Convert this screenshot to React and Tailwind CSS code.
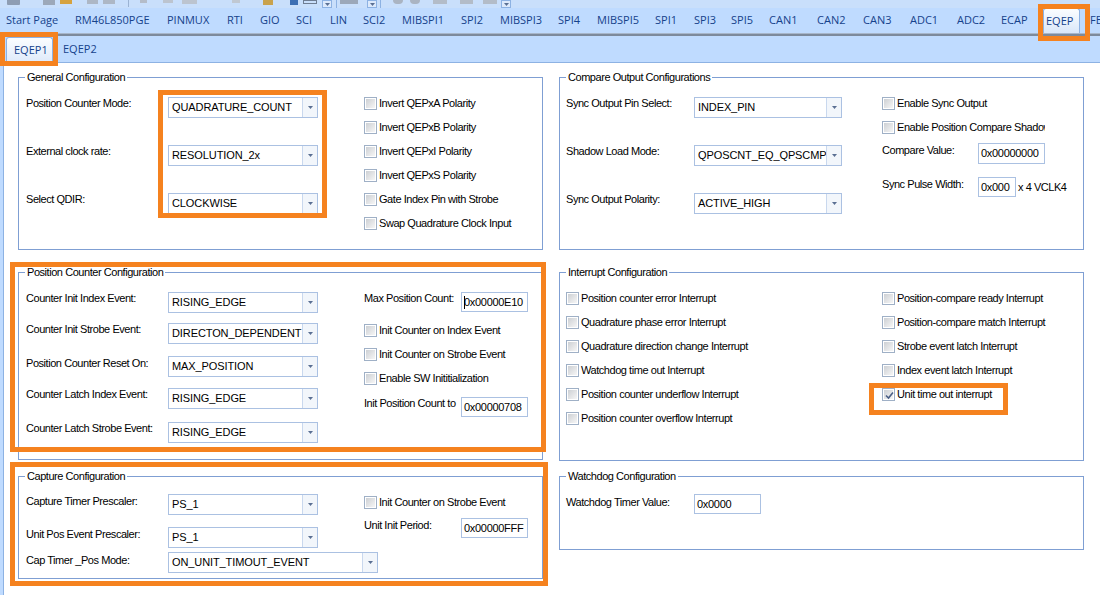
import React from "react";

const LABEL = "text-[11px] leading-[13px] tracking-[-0.45px] text-black whitespace-nowrap";

const tabs = [
  ["Start Page", "w-[69px]"],
  ["RM46L850PGE", "w-[92px]"],
  ["PINMUX", "w-[60px]"],
  ["RTI", "w-[33px]"],
  ["GIO", "w-[36px]"],
  ["SCI", "w-[34px]"],
  ["LIN", "w-[33px]"],
  ["SCI2", "w-[39px]"],
  ["MIBSPI1", "w-[59px]"],
  ["SPI2", "w-[39px]"],
  ["MIBSPI3", "w-[58px]"],
  ["SPI4", "w-[39px]"],
  ["MIBSPI5", "w-[58px]"],
  ["SPI1", "w-[39px]"],
  ["SPI3", "w-[37px]"],
  ["SPI5", "w-[38px]"],
  ["CAN1", "w-[48px]"],
  ["CAN2", "w-[46px]"],
  ["CAN3", "w-[47px]"],
  ["ADC1", "w-[47px]"],
  ["ADC2", "w-[44px]"],
  ["ECAP", "w-[45px]"],
  ["EQEP", "w-[44px]"],
  ["FEE", "w-[40px]"],
];

function Check({ checked }) {
  return (
    <span className="relative block w-[13px] h-[13px] shrink-0 border border-[#9fb0c6] bg-white p-[1px]">
      <span className="block w-full h-full bg-gradient-to-br from-[#cdd0d4] to-[#f6f6f6]" />
      {checked && (
        <svg className="absolute left-[1px] top-[1px]" width="11" height="11" viewBox="0 0 11 11">
          <path d="M2 5.5 L4.5 8 L9 2.5" fill="none" stroke="#4a5f86" strokeWidth="1.6" />
        </svg>
      )}
    </span>
  );
}

function CheckRow({ label, checked }) {
  return (
    <div className="flex items-center h-[24px]">
      <Check checked={checked} />
      <span className={`${LABEL} ml-[2px]`}>{label}</span>
    </div>
  );
}

function Arrow() {
  return (
    <svg width="5" height="3" viewBox="0 0 5 3">
      <path d="M0 0 H5 L2.5 3 Z" fill="#5a6f93" />
    </svg>
  );
}

function Combo({ value, w = "w-[150px]" }) {
  return (
    <div className={`${w} h-[21px] shrink-0 flex border border-[#abc1e2] bg-white`}>
      <div className="flex-1 min-w-0 flex items-center pl-[3px] text-[11px] tracking-[-0.1px] text-black overflow-hidden whitespace-nowrap">
        {value}
      </div>
      <div className="w-[15px] shrink-0 border-l border-[#c9d8ee] bg-[#f2f6fb] flex items-center justify-center">
        <Arrow />
      </div>
    </div>
  );
}

function TextBox({ value, w = "w-[67px]", h = "h-[20px]", caret }) {
  return (
    <div
      className={`${w} ${h} shrink-0 flex items-center border border-[#abc1e2] bg-white pl-[2px] text-[11px] tracking-[-0.3px] text-black overflow-hidden whitespace-nowrap`}
    >
      {caret && <span className="w-[1px] h-[13px] bg-black -mr-[1px]" />}
      {value}
    </div>
  );
}

function Group({ title, className, children }) {
  return (
    <div className={`relative shrink-0 border border-[#7f9fd3] ${className}`}>
      <span className={`absolute -top-[7px] left-[6px] bg-white px-[2px] ${LABEL}`}>{title}</span>
      {children}
    </div>
  );
}

function ComboRow({ label, value, labelW, comboW, className = "", labelPad = "" }) {
  return (
    <div className={`flex items-start ${className}`}>
      <span className={`${LABEL} ${labelW} ${labelPad} shrink-0`}>{label}</span>
      <Combo value={value} w={comboW} />
    </div>
  );
}

function Overlay({ className }) {
  return <div className={`absolute z-10 border-[5px] border-[#f5821f] pointer-events-none ${className}`} />;
}

export default function App() {
  return (
    <div className="relative w-[1100px] h-[595px] overflow-hidden bg-[#bfdbff] font-['Liberation_Sans',Arial,sans-serif] flex flex-col">
      {/* toolbar, cut off at the top */}
      <div className="h-[8px] shrink-0 flex items-start bg-[#c9dffb]">
        <span className="ml-[7px] w-[13px] h-[5px] bg-[#8e9db3] rounded-b-[1px]" />
        <span className="ml-[23px] w-[12px] h-[5px] bg-[#9ca8b9]" />
        <span className="ml-[5px] w-[12px] h-[4px] bg-[#d6a23e]" />
        <span className="ml-[15px] w-[11px] h-[4px] bg-[#adb7c5]" />
        <span className="ml-[5px] w-[12px] h-[4px] bg-[#adb7c5]" />
        <span className="ml-[13px] w-[1px] h-[7px] bg-[#9bb3d3]" />
        <span className="ml-[11px] w-[7px] h-[3px] bg-[#b4bcc8]" />
        <span className="ml-[16px] w-[10px] h-[3px] bg-[#bcc4cf]" />
        <span className="ml-[9px] w-[15px] h-[4px] bg-[#bcc4cf]" />
        <span className="ml-[35px] w-[8px] h-[3px] bg-[#c0c8d2]" />
        <span className="ml-[23px] w-[10px] h-[5px] bg-[#c9a24c]" />
        <span className="ml-[17px] w-[8px] h-[5px] bg-[#3d6fb4]" />
        <span className="ml-[5px] w-[14px] h-[4px] border border-[#6f7d92]" />
        <span className="ml-[5px] w-[10px] h-[8px] border border-[#8db2e3] bg-[#dce9fb] flex items-center justify-center">
          <Arrow />
        </span>
        <span className="ml-[4px] w-[1px] h-[8px] bg-[#8db2e3]" />
        <span className="ml-[3px] w-[18px] h-[4px] bg-[#9ca8b9]" />
        <span className="ml-[9px] w-[10px] h-[8px] border border-[#8db2e3] bg-[#dce9fb] flex items-center justify-center">
          <Arrow />
        </span>
        <span className="ml-[3px] w-[1px] h-[8px] bg-[#8db2e3]" />
        <span className="ml-[12px] w-[10px] h-[4px] rounded-b-full bg-[#aab4c2]" />
        <span className="ml-[7px] w-[10px] h-[4px] rounded-b-full bg-[#aab4c2]" />
        <span className="ml-[13px] w-[14px] h-[4px] bg-[#b3bcc8]" />
        <span className="ml-[13px] w-[13px] h-[4px] bg-[#b3bcc8]" />
        <span className="ml-[10px] w-[14px] h-[4px] bg-[#b3bcc8]" />
        <span className="ml-[4px] w-[10px] h-[8px] border border-[#8db2e3] bg-[#dce9fb] flex items-center justify-center">
          <Arrow />
        </span>
      </div>

      {/* main tab strip */}
      <div className="h-[25px] shrink-0 flex items-stretch pl-[6px] overflow-hidden font-['Open_Sans',sans-serif] text-[11px] text-[#15428b]">
        {tabs.map(([name, w]) =>
          name === "EQEP" ? (
            <div key={name} className={`${w} shrink-0`}>
              <div className="-ml-[3px] w-[37px] h-full pl-[2px] flex items-center border border-b-0 border-[#8db2e3] rounded-t-[3px] bg-gradient-to-b from-[#fbfdff] to-[#d9e7f9]">
                {name}
              </div>
            </div>
          ) : (
            <div key={name} className={`${w} shrink-0 flex items-center whitespace-nowrap`}>
              {name}
            </div>
          )
        )}
      </div>
      <div className="h-[3px] shrink-0 border-t border-[#a7b6ca] border-b-2 border-b-[#7d8a9c] bg-[#c3d7f2]" />

      {/* sub tabs */}
      <div className="h-[27px] shrink-0 flex items-end pl-[6px] border-b border-[#8db2e3] font-['Open_Sans',sans-serif] text-[11px] text-[#15428b]">
        <div className="w-[47px] h-[25px] pl-[7px] flex items-center border border-b-0 border-[#8db2e3] rounded-t-[3px] bg-gradient-to-b from-[#fbfdff] to-[#dfeafa]">
          EQEP1
        </div>
        <div className="ml-[10px] h-[25px] flex items-center">EQEP2</div>
      </div>

      {/* page */}
      <div className="flex-1 ml-[3px] border-l border-[#8db2e3] bg-white pl-[14px] pt-[14px] flex gap-[16px]">
        {/* left column */}
        <div className="w-[525px] shrink-0 flex flex-col">
          <Group title="General Configuration" className="h-[173px] flex">
            <div className="pl-[7px] pt-[19px] flex flex-col gap-[27px]">
              <ComboRow label="Position Counter Mode:" value="QUADRATURE_COUNT" labelW="w-[142px]" />
              <ComboRow label="External clock rate:" value="RESOLUTION_2x" labelW="w-[142px]" />
              <ComboRow label="Select QDIR:" value="CLOCKWISE" labelW="w-[142px]" />
            </div>
            <div className="ml-[46px] pt-[13px] flex flex-col">
              <CheckRow label="Invert QEPxA Polarity" />
              <CheckRow label="Invert QEPxB Polarity" />
              <CheckRow label="Invert QEPxI Polarity" />
              <CheckRow label="Invert QEPxS Polarity" />
              <CheckRow label="Gate Index Pin with Strobe" />
              <CheckRow label="Swap Quadrature Clock Input" />
            </div>
          </Group>

          <Group title="Position Counter Configuration" className="mt-[22px] h-[188px] flex">
            <div className="pl-[7px] pt-[19px] flex flex-col">
              <ComboRow label="Counter Init Index Event:" value="RISING_EDGE" labelW="w-[142px]" />
              <ComboRow label="Counter Init Strobe Event:" value="DIRECTON_DEPENDENT" labelW="w-[142px]" className="mt-[10px]" />
              <ComboRow label="Position Counter Reset On:" value="MAX_POSITION" labelW="w-[142px]" className="mt-[12px]" labelPad="pt-[1px]" />
              <ComboRow label="Counter Latch Index Event:" value="RISING_EDGE" labelW="w-[142px]" className="mt-[11px]" />
              <ComboRow label="Counter Latch Strobe Event:" value="RISING_EDGE" labelW="w-[142px]" className="mt-[13px]" />
            </div>
            <div className="ml-[46px] pt-[19px] flex flex-col">
              <div className="flex items-start">
                <span className={`${LABEL} w-[97px] shrink-0`}>Max Position Count:</span>
                <TextBox value="0x00000E10" caret />
              </div>
              <div className="mt-[6px]">
                <CheckRow label="Init Counter on Index Event" />
                <CheckRow label="Init Counter on Strobe Event" />
                <CheckRow label="Enable SW Inititialization" />
              </div>
              <div className="mt-[7px] flex items-start">
                <span className={`${LABEL} w-[97px] shrink-0`}>Init Position Count to</span>
                <TextBox value="0x00000708" />
              </div>
            </div>
          </Group>

          <Group title="Capture Configuration" className="mt-[16px] h-[103px] flex">
            <div className="pl-[7px] pt-[17px] flex flex-col">
              <ComboRow label="Capture Timer Prescaler:" value="PS_1" labelW="w-[142px]" labelPad="pt-[1px]" />
              <ComboRow label="Unit Pos Event Prescaler:" value="PS_1" labelW="w-[142px]" labelPad="pt-[1px]" className="mt-[12px]" />
              <ComboRow label="Cap Timer _Pos Mode:" value="ON_UNIT_TIMOUT_EVENT" labelW="w-[142px]" comboW="w-[210px]" labelPad="pt-[2px]" className="mt-[4px]" />
            </div>
            <div className="-ml-[14px] pt-[13px] flex flex-col">
              <CheckRow label="Init Counter on Strobe Event" />
              <div className="mt-[4px] flex items-start">
                <span className={`${LABEL} w-[97px] shrink-0 pt-[1px]`}>Unit Init Period:</span>
                <TextBox value="0x00000FFF" />
              </div>
            </div>
          </Group>
        </div>

        {/* right column */}
        <div className="w-[525px] shrink-0 flex flex-col">
          <Group title="Compare Output Configurations" className="h-[173px] flex">
            <div className="pl-[6px] pt-[19px] flex flex-col gap-[27px]">
              <ComboRow label="Sync Output Pin Select:" value="INDEX_PIN" labelW="w-[128px]" comboW="w-[148px]" />
              <ComboRow label="Shadow Load Mode:" value="QPOSCNT_EQ_QPSCMP" labelW="w-[128px]" comboW="w-[148px]" />
              <ComboRow label="Sync Output Polarity:" value="ACTIVE_HIGH" labelW="w-[128px]" comboW="w-[148px]" />
            </div>
            <div className="ml-[40px] pt-[13px] flex flex-col">
              <CheckRow label="Enable Sync Output" />
              <div className="w-[163px] overflow-hidden">
                <CheckRow label="Enable Position Compare Shadow" />
              </div>
              <div className="mt-[4px] flex items-start">
                <span className={`${LABEL} w-[96px] shrink-0 pt-[1px]`}>Compare Value:</span>
                <TextBox value="0x00000000" h="h-[21px]" />
              </div>
              <div className="mt-[13px] flex items-start">
                <span className={`${LABEL} w-[96px] shrink-0 pt-[1px]`}>Sync Pulse Width:</span>
                <TextBox value="0x000" w="w-[38px]" />
                <span className={`${LABEL} ml-[2px] pt-[4px]`}>x 4 VCLK4</span>
              </div>
            </div>
          </Group>

          <Group title="Interrupt Configuration" className="mt-[22px] h-[189px] flex">
            <div className="pl-[6px] pt-[13px] w-[322px] shrink-0 flex flex-col">
              <CheckRow label="Position counter error Interrupt" />
              <CheckRow label="Quadrature phase error Interrupt" />
              <CheckRow label="Quadrature direction change Interrupt" />
              <CheckRow label="Watchdog time out Interrupt" />
              <CheckRow label="Position counter underflow Interrupt" />
              <CheckRow label="Position counter overflow Interrupt" />
            </div>
            <div className="pt-[13px] flex flex-col">
              <CheckRow label="Position-compare ready Interrupt" />
              <CheckRow label="Position-compare match Interrupt" />
              <CheckRow label="Strobe event latch Interrupt" />
              <CheckRow label="Index event latch Interrupt" />
              <CheckRow label="Unit time out interrupt" checked />
            </div>
          </Group>

          <Group title="Watchdog Configuration" className="mt-[15px] h-[74px]">
            <div className="pl-[6px] pt-[17px] flex items-start">
              <span className={`${LABEL} w-[128px] shrink-0 pt-[2px]`}>Watchdog Timer Value:</span>
              <TextBox value="0x0000" />
            </div>
          </Group>
        </div>
      </div>

      {/* annotation boxes */}
      <Overlay className="left-[1038px] top-[4px] w-[52px] h-[37px]" />
      <Overlay className="left-[0px] top-[32px] w-[58px] h-[34px]" />
      <Overlay className="left-[158px] top-[90px] w-[169px] h-[128px]" />
      <Overlay className="left-[10px] top-[262px] w-[536px] h-[190px]" />
      <Overlay className="left-[869px] top-[383px] w-[139px] h-[32px]" />
      <Overlay className="left-[10px] top-[462px] w-[538px] h-[124px]" />
    </div>
  );
}
